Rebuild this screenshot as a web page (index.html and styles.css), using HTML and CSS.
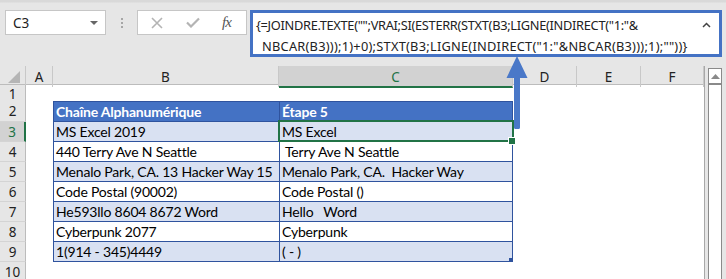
FILE: index.html
```html
<!DOCTYPE html>
<html>
<head>
<meta charset="utf-8">
<link rel="stylesheet" href="styles.css">
</head>
<body>
<div class="app">
  <div class="toolbar">
    <div class="namebox"><span class="nb-text">C3</span><span class="nb-drop"></span></div>
    <div class="dots"><i></i><i></i><i></i></div>
    <div class="btnbox">
      <svg class="ic-x" width="12" height="12" viewBox="0 0 12 12"><path d="M1 1L11 11M11 1L1 11" stroke="#b4b4b4" stroke-width="1.6" fill="none"/></svg>
      <svg class="ic-ok" width="14" height="11" viewBox="0 0 14 11"><path d="M1 5.5L5 9.5L13 1.5" stroke="#b4b4b4" stroke-width="2.2" fill="none"/></svg>
      <span class="ic-fx">fx</span>
    </div>
    <div class="formula">
      <div class="f-l1">{=JOINDRE.TEXTE("";VRAI;SI(ESTERR(STXT(B3;LIGNE(INDIRECT("1:"&amp;</div>
      <div class="f-l2">NBCAR(B3)));1)+0);STXT(B3;LIGNE(INDIRECT("1:"&amp;NBCAR(B3)));1);""))}</div>
      <svg class="caret" width="9" height="6" viewBox="0 0 9 6"><path d="M1 5L4.5 1.5L8 5" stroke="#444" stroke-width="1.5" fill="none"/></svg>
    </div>
  </div>
  <div class="sheet">
    <div class="grid">
      <div class="row hdr">
        <div class="corner"><svg width="14" height="14" viewBox="0 0 14 14"><path d="M13 1V13H1Z" fill="#b5b5b5"/></svg></div>
        <div class="ch">A</div>
        <div class="ch">B</div>
        <div class="ch sel">C</div>
        <div class="ch">D</div>
        <div class="ch">E</div>
        <div class="ch">F</div>
      </div>
      <div class="row r1"><div class="rh">1</div><div></div><div></div><div></div><div></div><div></div><div></div></div>
      <div class="row r2"><div class="rh">2</div><div></div><div class="t th tb">Chaîne Alphanumérique</div><div class="t th tc">Étape 5</div><div></div><div></div><div></div></div>
      <div class="row"><div class="rh sel">3</div><div></div><div class="t alt tb">MS Excel 2019</div><div class="t alt tc selcell">MS Excel</div><div></div><div></div><div></div></div>
      <div class="row"><div class="rh">4</div><div></div><div class="t tb">440 Terry Ave N Seattle</div><div class="t tc">&nbsp;Terry Ave N Seattle</div><div></div><div></div><div></div></div>
      <div class="row"><div class="rh">5</div><div></div><div class="t alt tb">Menalo Park, CA. 13 Hacker Way 15</div><div class="t alt tc">Menalo Park, CA.&nbsp; Hacker Way</div><div></div><div></div><div></div></div>
      <div class="row"><div class="rh">6</div><div></div><div class="t tb">Code Postal (90002)</div><div class="t tc">Code Postal ()</div><div></div><div></div><div></div></div>
      <div class="row"><div class="rh">7</div><div></div><div class="t alt tb">He593llo 8604 8672 Word</div><div class="t alt tc">Hello&nbsp;&nbsp; Word</div><div></div><div></div><div></div></div>
      <div class="row"><div class="rh">8</div><div></div><div class="t tb">Cyberpunk 2077</div><div class="t tc">Cyberpunk</div><div></div><div></div><div></div></div>
      <div class="row"><div class="rh">9</div><div></div><div class="t alt tb">1(914 - 345)4449</div><div class="t alt tc last">( - )</div><div></div><div></div><div></div></div>
      <div class="row"><div class="rh">10</div><div></div><div></div><div></div><div></div><div></div><div></div></div>
    </div>
    <div class="vscroll">
      <div class="vs-up"><svg width="9" height="5" viewBox="0 0 9 5"><path d="M0 5L4.5 0L9 5Z" fill="#8a8a8a"/></svg></div>
    </div>
    <svg class="arrow" width="24" height="76" viewBox="0 0 24 76"><path d="M12 0L22.5 22H15V71.5Q15 73 13.5 73H10.5Q9 73 9 71.5V22H1.5Z" fill="#4a78c8"/></svg>
  </div>
</div>
</body>
</html>
```

FILE: styles.css
```css
* { box-sizing: border-box; }
html, body { margin: 0; padding: 0; }
body { background: #e6e6e6; width: 726px; height: 279px; overflow: hidden; }
.app { position: relative; width: 726px; height: 279px; }

.toolbar {
  height: 66px;
  display: flex;
  align-items: flex-start;
  padding-top: 10px;
  padding-left: 5px;
  background: linear-gradient(#d9d9d9 0, #d9d9d9 2px, #e6e6e6 3px);
}
.namebox {
  width: 101px; height: 25px;
  background: #fff; border: 1px solid #c6c6c6;
  display: flex; align-items: center; justify-content: space-between;
  padding: 0 7px 0 7px;
  font-family: "Noto Sans", sans-serif; font-size: 13.5px; color: #222;
}
.nb-drop { width: 0; height: 0; border-left: 4px solid transparent; border-right: 4px solid transparent; border-top: 4px solid #666; margin-top: 1px; }
.dots { width: 31px; height: 25px; display: flex; flex-direction: column; align-items: center; justify-content: center; gap: 2px; }
.dots i { display: block; width: 2px; height: 2px; background: #a6a6a6; }
.btnbox {
  width: 110px; height: 25px;
  background: #fff; border: 1px solid #c6c6c6;
  display: flex; align-items: center;
  padding-left: 13px;
}
.ic-x { margin-right: 23px; }
.ic-ok { margin-right: 22px; }
.ic-fx { font-family: "Liberation Serif", serif; font-style: italic; font-size: 15px; color: #555; letter-spacing: -1px; }
.formula {
  position: relative;
  margin-left: 3px;
  width: 472px; height: 47px;
  background: #fff;
  border: 3px solid #4472c4;
  padding: 2px 0 0 3px;
  font-family: "Noto Sans", sans-serif; font-size: 12.8px; color: #222;
  line-height: 21px;
  white-space: nowrap;
}
.f-l1 { letter-spacing: -0.3px; }
.f-l2 { padding-left: 6px; letter-spacing: 0.25px; }
.caret { position: absolute; right: 8px; top: 9px; }

.sheet { position: relative; display: flex; height: 213px; }
.grid { width: 705px; background: #fff; border-right: 1px solid #a8a8a8; }
.row {
  display: grid;
  grid-template-columns: 26px 27px 226px 234px 64px 64px 63px;
  height: 20px;
  font-family: "Lato", sans-serif; font-size: 14px; letter-spacing: -0.2px;
}
.row.hdr { height: 19px; background: #e6e6e6; border-bottom: 1px solid #bcbcbc; }
.row.r1 { height: 16px; }
.row.r2 { height: 21px; }
.corner { display: flex; align-items: flex-end; justify-content: flex-end; padding: 0 4px 3px 0; border-right: 1px solid #c8c8c8; }
.ch {
  display: flex; align-items: center; justify-content: center;
  font-family: "Noto Sans", sans-serif; font-size: 13.5px; letter-spacing: 0; color: #222;
  border-right: 1px solid #c8c8c8;
  padding-top: 1px;
}
.ch.sel { background: #d2d2d2; color: #217346; border-bottom: 2px solid #217346; margin-bottom: -1px; padding-top: 2px; }
.rh {
  background: #e6e6e6;
  border-right: 1px solid #bcbcbc;
  border-bottom: 1px solid #d4d4d4;
  display: flex; align-items: center; justify-content: center;
  font-family: "Noto Sans", sans-serif; font-size: 13.5px; letter-spacing: 0; color: #222;
}
.rh.sel { background: #d2d2d2; border-right: 2px solid #217346; color: #217346; }

.t {
  border-bottom: 1px solid #2f539e;
  padding-left: 2px;
  white-space: nowrap; overflow: visible;
  color: #000;
  line-height: 19px;
}
.tb { border-left: 1px solid #2f539e; }
.tc { border-left: 1px solid #2f539e; border-right: 1px solid #2f539e; }
.th { background: #4472c4; color: #fff; font-weight: bold; border-top: 1px solid #2f539e; }
.alt { background: #d9e1f2; }
.selcell { position: relative; }
.selcell::before {
  content: ""; position: absolute; left: -2px; top: -2px; right: -2px; bottom: -1px;
  border: 2px solid #217346;
}
.selcell::after {
  content: ""; position: absolute; right: -4px; bottom: -4px; width: 6px; height: 6px;
  background: #217346; border: 1px solid #fff;
}
.last { position: relative; }
.last::after { content: ""; position: absolute; right: 0; bottom: 0; width: 3px; height: 3px; background: #2f539e; }

.vscroll { flex: 1; padding: 2px 4px 0 3px; background: #e6e6e6; }
.vs-up {
  height: 213px;
  border: 1px solid #8a8a8a;
  display: flex; flex-direction: column; align-items: center;
  background: linear-gradient(#fff 0, #fff 14px, #8a8a8a 14px, #8a8a8a 16px, #fff 16px);
  padding-top: 5px;
}
.arrow { position: absolute; left: 505px; top: -10px; }
```
